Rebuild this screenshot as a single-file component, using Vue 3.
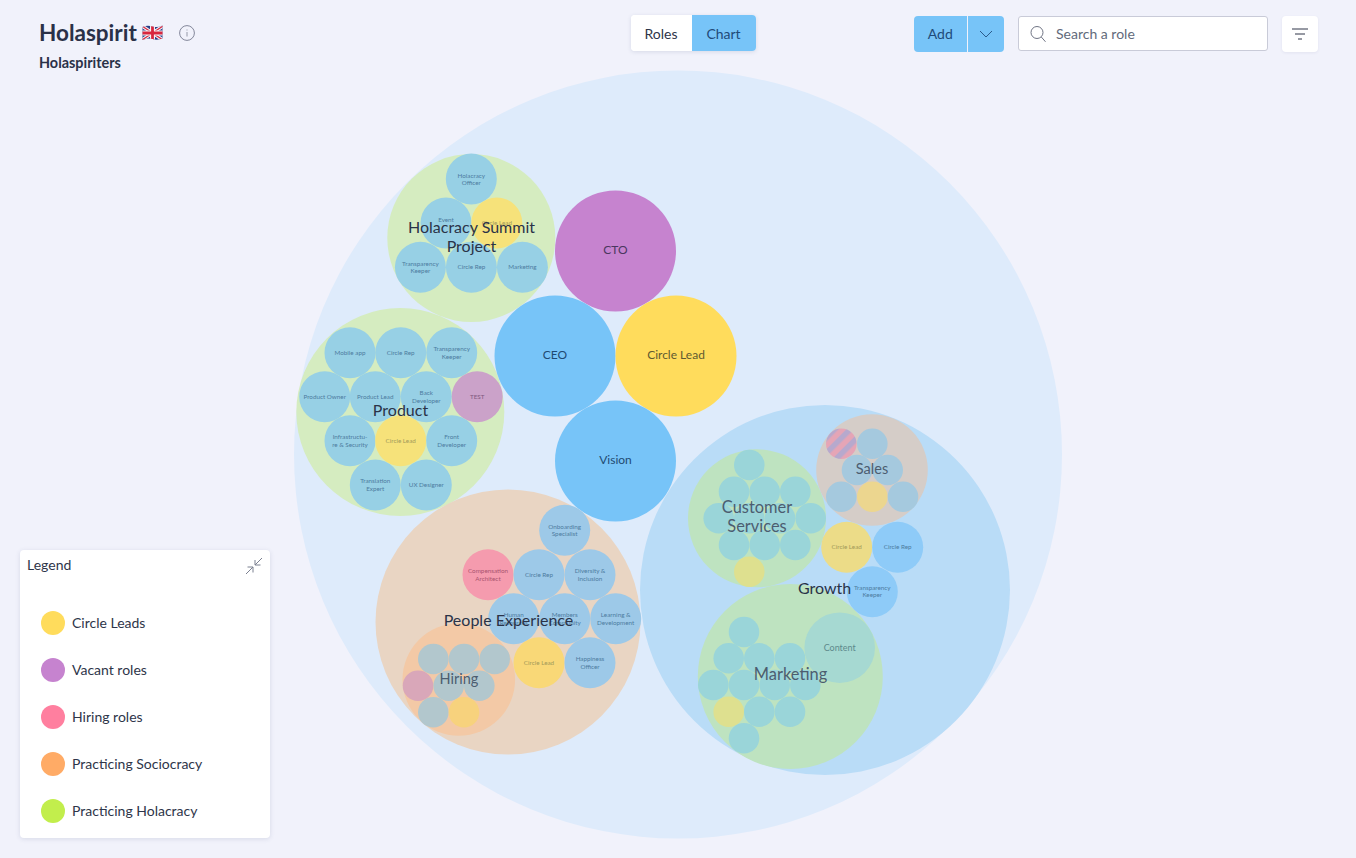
<script setup>
const BLUE = '#97d0e5'
const YEL = '#f6e27a'
const PX = '#9dc9e8'
const S = '#a5c9de'
const T = '#9ad5d9'
const H = '#b2c7cd'
const row = (y, xs, r, fill) => xs.map(x => ({ x, y, r, fill }))

const groups = [
  { x: 678, y: 454.5, r: 384, fill: '#deebfb' },
  { x: 471.3, y: 238, r: 84, fill: '#d5ecc0' },
  { x: 400.3, y: 412, r: 104, fill: '#d5ecc0' },
  { x: 508, y: 622, r: 132.5, fill: '#e9d5c3' },
  { x: 458.8, y: 679.5, r: 56.3, fill: '#f3c9a6' },
  { x: 825, y: 590, r: 185, fill: '#b9dcf7' },
  { x: 757, y: 518.3, r: 69, fill: '#bee3c0' },
  { x: 872, y: 470, r: 55.8, fill: '#d5cdc8' },
  { x: 790.3, y: 676.5, r: 92.5, fill: '#bee3c0' }
]

const roles = [
  { x: 471.3, y: 179, fill: BLUE, t: ['Holacracy', 'Officer'], lh: 7 },
  { x: 446, y: 223, fill: BLUE, t: ['Event'] , dy: -3 },
  { x: 496.8, y: 223, fill: YEL, t: ['Circle Lead'], warm: true },
  { x: 420.4, y: 267.3, fill: BLUE, t: ['Transparency', 'Keeper'], lh: 7 },
  { x: 471.4, y: 267.3, fill: BLUE, t: ['Circle Rep'] },
  { x: 522.4, y: 267.3, fill: BLUE, t: ['Marketing'] },

  { x: 350, y: 352.7, fill: BLUE, t: ['Mobile app'] },
  { x: 400.7, y: 352.7, fill: BLUE, t: ['Circle Rep'] },
  { x: 451.7, y: 352.7, fill: BLUE, t: ['Transparency', 'Keeper'] },
  { x: 324.7, y: 396.7, fill: BLUE, t: ['Product Owner'] },
  { x: 375.3, y: 396.7, fill: BLUE, t: ['Product Lead'] },
  { x: 426.3, y: 396.7, fill: BLUE, t: ['Back', 'Developer'] },
  { x: 477.2, y: 396.7, fill: '#cba2c9', t: ['TEST'], purple: true },
  { x: 350, y: 440.7, fill: BLUE, t: ['Infrastructu-', 're & Security'] },
  { x: 400.7, y: 440.7, fill: YEL, t: ['Circle Lead'], warm: true },
  { x: 451.7, y: 440.7, fill: BLUE, t: ['Front', 'Developer'] },
  { x: 375.3, y: 485, fill: BLUE, t: ['Translation', 'Expert'] },
  { x: 426.3, y: 485, fill: BLUE, t: ['UX Designer'] },

  { x: 564.7, y: 530.3, fill: PX, t: ['Onboarding', 'Specialist'], lh: 7 },
  { x: 488, y: 574.7, fill: '#f59bae', t: ['Compensation', 'Architect'], pink: true },
  { x: 539, y: 574.7, fill: PX, t: ['Circle Rep'] },
  { x: 590, y: 574.7, fill: PX, t: ['Diversity &', 'Inclusion'] },
  { x: 513.7, y: 618.7, fill: PX, t: ['Human', 'Resources'] },
  { x: 564.7, y: 618.7, fill: PX, t: ['Members', 'Community'] },
  { x: 615.7, y: 618.7, fill: PX, t: ['Learning &', 'Development'] },
  { x: 539, y: 662.7, fill: '#f9d877', t: ['Circle Lead'], warm: true },
  { x: 590, y: 662.7, fill: PX, t: ['Happiness', 'Officer'] },

  { x: 846.7, y: 547.3, fill: '#ecdc88', t: ['Circle Lead'], warm: true },
  { x: 897.7, y: 547.3, fill: '#8ecbf8', t: ['Circle Rep'] },
  { x: 872.3, y: 591.7, fill: '#8ecbf8', t: ['Transparency', 'Keeper'], lh: 7 }
].map(c => ({ r: 25.5, ...c }))

const dots = [
  ...row(659, [433.3, 464, 494.7], 15.3, H),
  { x: 418, y: 685.7, r: 15.3, fill: '#d9a7b9' },
  ...row(685.7, [448.7, 479.3], 15.3, H),
  { x: 433.3, y: 712.3, r: 15.3, fill: H },
  { x: 464, y: 712.3, r: 15.3, fill: '#f7d27d' },

  ...row(465, [749.3], 15.3, T),
  ...row(491.7, [734, 764.7, 795.3], 15.3, T),
  ...row(518.3, [718.7, 749.3, 780, 810.7], 15.3, T),
  ...row(545, [734, 764.7, 795.3], 15.3, T),
  { x: 749.3, y: 571.7, r: 15.3, fill: '#dee08f' },

  { x: 841.3, y: 443.7, r: 15.3, fill: 'url(#stripes)' },
  ...row(443.7, [872.3], 15.3, S),
  ...row(470, [857, 887.7], 15.3, S),
  { x: 841.3, y: 496.7, r: 15.3, fill: S },
  { x: 872.3, y: 496.7, r: 15.3, fill: '#ecd68f' },
  { x: 903, y: 496.7, r: 15.3, fill: S },

  { x: 839.7, y: 647.7, r: 35.3, fill: '#a6d9d2' },
  ...row(632, [744], 15.3, T),
  ...row(658.3, [728.7, 759.3, 790], 15.3, T),
  ...row(685, [713.3, 744, 774.7, 805.3], 15.3, T),
  { x: 728.7, y: 711.7, r: 15.3, fill: '#dee08f' },
  ...row(711.7, [759.3, 790], 15.3, T),
  ...row(738.3, [744], 15.3, T)
]

const big = [
  { x: 615.5, y: 251, fill: '#c683cf', t: 'CTO', c: 'lbl-purple' },
  { x: 555, y: 356, fill: '#77c4f8', t: 'CEO', c: 'lbl-blue' },
  { x: 676, y: 356, fill: '#ffdc5c', t: 'Circle Lead', c: 'lbl-warm' },
  { x: 615.5, y: 461, fill: '#77c4f8', t: 'Vision', c: 'lbl-blue' }
]

const titles = [
  { x: 471.5, y: 233, t: 'Holacracy Summit', c: 'strong' },
  { x: 471.5, y: 252, t: 'Project', c: 'strong' },
  { x: 400.5, y: 415.5, t: 'Product', c: 'strong' },
  { x: 508.5, y: 625.5, t: 'People Experience', c: 'strong' },
  { x: 459, y: 684, t: 'Hiring', c: 'soft small' },
  { x: 757, y: 512.5, t: 'Customer', c: 'soft' },
  { x: 757, y: 531.5, t: 'Services', c: 'soft' },
  { x: 872, y: 474, t: 'Sales', c: 'soft small' },
  { x: 824.5, y: 594, t: 'Growth', c: 'strong' },
  { x: 790.5, y: 680, t: 'Marketing', c: 'soft' }
]

const legend = [
  { label: 'Circle Leads', color: '#ffdc5c' },
  { label: 'Vacant roles', color: '#c683cf' },
  { label: 'Hiring roles', color: '#ff7f9f' },
  { label: 'Practicing Sociocracy', color: '#ffab66' },
  { label: 'Practicing Holacracy', color: '#c2ee4c' }
]

const lineY = (c, i) => {
  const lh = c.lh || 8
  return c.y + (c.dy || 0) + 2 + (i - (c.t.length - 1) / 2) * lh
}
const roleClass = c => (c.warm ? 'r-warm' : c.pink ? 'r-pink' : c.purple ? 'r-purple' : 'r-blue')
</script>

<template>
  <div class="page">
    <svg class="chart" width="1356" height="858" viewBox="0 0 1356 858">
      <defs>
        <pattern id="stripes" width="11" height="11" patternUnits="userSpaceOnUse" patternTransform="rotate(45)">
          <rect width="11" height="11" fill="#e5a5b6" />
          <rect width="5.5" height="11" fill="#b7a9cd" />
        </pattern>
      </defs>
      <circle v-for="(g, i) in groups" :key="'g' + i" :cx="g.x" :cy="g.y" :r="g.r" :fill="g.fill" />
      <circle v-for="(d, i) in dots" :key="'d' + i" :cx="d.x" :cy="d.y" :r="d.r" :fill="d.fill" />
      <g v-for="(b, i) in big" :key="'b' + i">
        <circle :cx="b.x" :cy="b.y" r="60.5" :fill="b.fill" />
        <text :x="b.x" :y="b.y + 3" class="big" :class="b.c" text-anchor="middle">{{ b.t }}</text>
      </g>
      <g v-for="(c, i) in roles" :key="'r' + i">
        <circle :cx="c.x" :cy="c.y" :r="c.r" :fill="c.fill" />
        <text
          v-for="(line, j) in c.t"
          :key="j"
          :x="c.x"
          :y="lineY(c, j)"
          class="role"
          :class="roleClass(c)"
          text-anchor="middle"
        >{{ line }}</text>
      </g>
      <text x="839.7" y="650.5" class="content" text-anchor="middle">Content</text>
      <text
        v-for="(t, i) in titles"
        :key="'t' + i"
        :x="t.x"
        :y="t.y"
        class="title-label"
        :class="t.c"
        text-anchor="middle"
      >{{ t.t }}</text>
    </svg>

    <header class="top">
      <div class="brand">
        <div class="brand-line">
          <h1>Holaspirit</h1>
          <svg class="flag" width="21" height="16" viewBox="0 0 21 16">
            <defs>
              <clipPath id="flagclip">
                <path d="M0.5 2 Q5 0 10.5 1.5 T20.5 0.5 V13.5 Q15.5 15.5 10.5 14 T0.5 15 Z" />
              </clipPath>
            </defs>
            <g clip-path="url(#flagclip)">
              <rect width="21" height="16" fill="#2b3f87" />
              <path d="M0 1 L21 15 M21 1 L0 15" stroke="#f4f4f6" stroke-width="3.4" />
              <path d="M0 1 L21 15 M21 1 L0 15" stroke="#d8273f" stroke-width="1.2" />
              <path d="M10.5 0 V16 M0 8 H21" stroke="#f4f4f6" stroke-width="5" />
              <path d="M10.5 0 V16 M0 8 H21" stroke="#d8273f" stroke-width="2.8" />
            </g>
          </svg>
          <svg class="info" width="16" height="16" viewBox="0 0 16 16" fill="none">
            <circle cx="8" cy="8" r="7.4" stroke="#83879a" stroke-width="1" />
            <path d="M8 7 V11.6 M8 4.4 V5.4" stroke="#a5a8b6" stroke-width="1.2" />
          </svg>
        </div>
        <div class="sub">Holaspiriters</div>
      </div>

      <div class="toggle">
        <button class="seg">Roles</button>
        <button class="seg active">Chart</button>
      </div>

      <div class="tools">
        <div class="add">
          <button class="add-main">Add</button>
          <button class="add-caret">
            <svg width="14" height="8" viewBox="0 0 14 8" fill="none">
              <path d="M1 1 L7 7 L13 1" stroke="#2b5b8c" stroke-width="1" />
            </svg>
          </button>
        </div>
        <div class="search">
          <svg width="17" height="18" viewBox="0 0 17 18" fill="none">
            <circle cx="7" cy="7.5" r="6" stroke="#6f7484" stroke-width="1" />
            <path d="M11.3 12 L15.5 16.8" stroke="#6f7484" stroke-width="1" />
          </svg>
          <span>Search a role</span>
        </div>
        <button class="filter">
          <svg width="16" height="12" viewBox="0 0 16 12" fill="none">
            <path d="M0 1 H16 M3 6 H13 M6 11 H10" stroke="#2e3549" stroke-width="1" />
          </svg>
        </button>
      </div>
    </header>

    <aside class="legend">
      <div class="legend-head">
        <span>Legend</span>
        <svg width="16" height="16" viewBox="0 0 16 16" fill="none">
          <path d="M16 0 L9 7 M9 2 V7 H14.5 M0 16 L7 9 M1.5 9 H7 V14.5" stroke="#7b8090" stroke-width="1" />
        </svg>
      </div>
      <ul>
        <li v-for="item in legend" :key="item.label">
          <i :style="{ background: item.color }"></i>
          <span>{{ item.label }}</span>
        </li>
      </ul>
    </aside>
  </div>
</template>

<style scoped>
.page {
  position: relative;
  width: 1356px;
  height: 858px;
  overflow: hidden;
  background: #f1f2fb;
  font-family: Lato, "Noto Sans", sans-serif;
  color: #252c43;
}
.chart {
  position: absolute;
  left: 0;
  top: 0;
}
.chart text {
  font-family: Lato, "Noto Sans", sans-serif;
}
.role {
  font-size: 6.3px;
}
.r-blue { fill: #4d7c9f; }
.r-warm { fill: #a39a5a; }
.r-pink { fill: #a9546f; }
.r-purple { fill: #80587f; }
.big {
  font-size: 12px;
}
.lbl-purple { fill: #4a3760; }
.lbl-blue { fill: #1f4a72; }
.lbl-warm { fill: #5f5a30; }
.content {
  font-size: 9px;
  fill: #5e8a8c;
}
.title-label {
  font-size: 16px;
}
.strong { fill: #2a3348; }
.soft { fill: #4c5d70; font-size: 16.4px; }
.small { font-size: 14.5px; }

.top {
  position: relative;
  display: flex;
  align-items: flex-start;
  padding: 15px 38px 0 39px;
}
.brand {
  width: 591.5px;
}
.brand-line {
  display: flex;
  align-items: center;
  height: 36px;
}
h1 {
  margin: 0;
  font-size: 22.5px;
  font-weight: 700;
  line-height: 36px;
  color: #2a3148;
}
.flag {
  margin-left: 5px;
}
.info {
  margin-left: 16px;
}
.sub {
  margin-top: 3px;
  font-size: 14.4px;
  font-weight: 700;
  line-height: 18px;
  color: #2a3148;
}
button {
  font-family: inherit;
  border: 0;
  padding: 0;
  cursor: pointer;
}
.toggle {
  display: flex;
  height: 36px;
  border-radius: 4px;
  overflow: hidden;
  background: #fff;
  box-shadow: 0 1px 4px rgba(60, 70, 110, .14);
}
.seg {
  width: 61px;
  background: #fff;
  font-size: 14px;
  color: #2e3549;
}
.seg.active {
  width: 64px;
  background: #77c4f8;
  color: #1f4a78;
}
.tools {
  display: flex;
  align-items: center;
  gap: 14px;
  margin-left: auto;
  margin-top: 1px;
}
.add {
  display: flex;
  height: 36px;
  border-radius: 4px;
  overflow: hidden;
}
.add-main {
  width: 53.5px;
  padding-bottom: 2px;
  background: #77c4f8;
  font-size: 14px;
  color: #1f4a78;
}
.add-caret {
  width: 36px;
  margin-left: 1px;
  display: flex;
  align-items: center;
  justify-content: center;
  background: #77c4f8;
}
.search {
  box-sizing: border-box;
  width: 250px;
  height: 35px;
  display: flex;
  align-items: center;
  gap: 9px;
  padding-left: 11px;
  margin-top: -1px;
  background: #fff;
  border: 1px solid #c9cbd8;
  border-radius: 3px;
  font-size: 14px;
  color: #626a7b;
}
.filter {
  width: 36px;
  height: 36px;
  display: flex;
  align-items: center;
  justify-content: center;
  background: #fff;
  border-radius: 4px;
  box-shadow: 0 1px 3px rgba(60, 70, 110, .08);
}
.legend {
  position: absolute;
  left: 20px;
  top: 550px;
  width: 250px;
  height: 288px;
  background: #fff;
  border-radius: 4px;
  box-shadow: 0 1px 5px rgba(60, 70, 110, .14);
  box-sizing: border-box;
}
.legend-head {
  display: flex;
  justify-content: space-between;
  align-items: flex-start;
  padding: 7px 8px 0 7px;
  font-size: 14px;
  line-height: 15px;
  color: #2e3549;
}
.legend-head svg {
  margin-top: 1px;
}
.legend ul {
  list-style: none;
  margin: 0;
  padding: 37px 0 0 21px;
  display: flex;
  flex-direction: column;
  gap: 23px;
}
.legend li {
  display: flex;
  align-items: center;
  gap: 7px;
  height: 24px;
  font-size: 14px;
  color: #2e3549;
}
.legend li span {
  margin-top: -2px;
}
.legend i {
  width: 24px;
  height: 24px;
  border-radius: 50%;
}
</style>
